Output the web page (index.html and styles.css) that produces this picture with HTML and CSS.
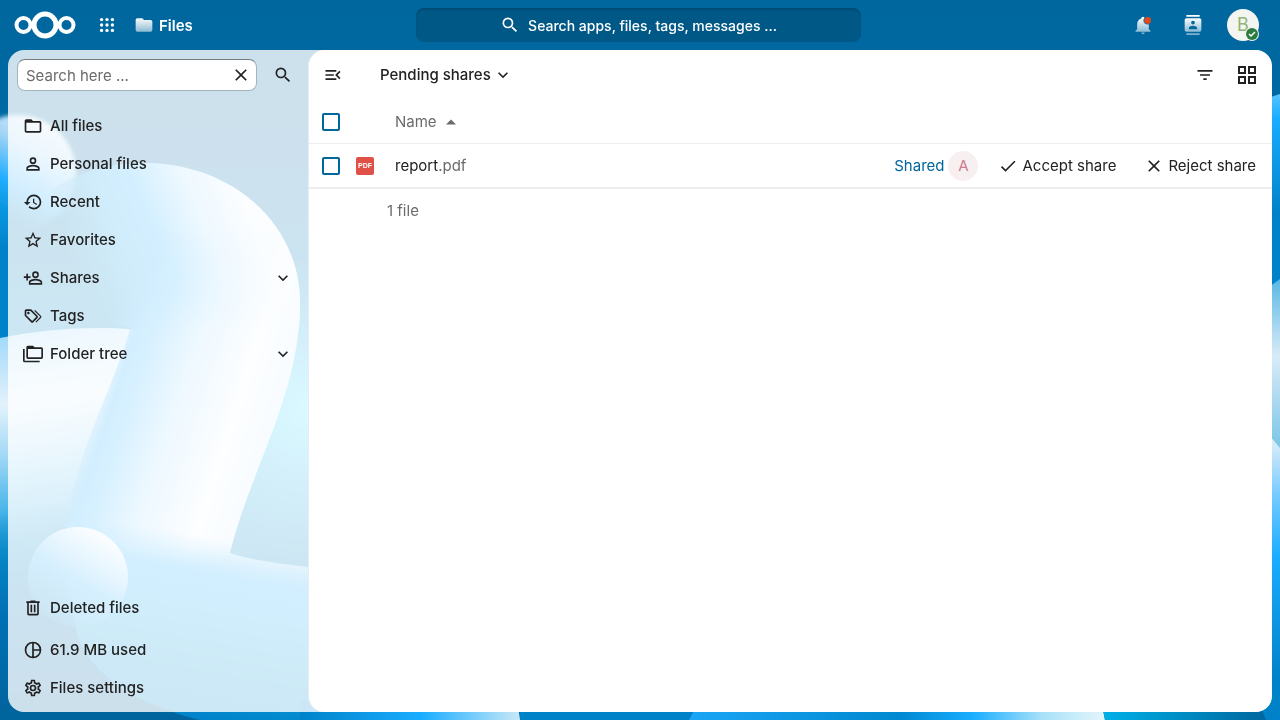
FILE: index.html
```
<!DOCTYPE html>
<html lang="en">
<head>
    <meta charset="UTF-8">
    <meta name="viewport" content="width=device-width, initial-scale=1.0">
    <title>Pending shares - Files</title>
    <link rel="stylesheet" href="styles.css">
</head>
<body>
    <svg class="wallpaper" viewBox="0 0 1280 720" preserveAspectRatio="none" aria-hidden="true">
        <defs>
            <linearGradient id="base" x1="0" y1="0" x2="0" y2="1">
                <stop offset="0" stop-color="#00679e"/>
                <stop offset=".2" stop-color="#0069a3"/>
                <stop offset=".45" stop-color="#0085c4"/>
                <stop offset=".72" stop-color="#0a90cc"/>
                <stop offset=".86" stop-color="#0070b4"/>
                <stop offset="1" stop-color="#00639c"/>
            </linearGradient>
            <radialGradient id="cyan" gradientUnits="userSpaceOnUse" cx="308" cy="410" r="150">
                <stop offset="0" stop-color="#45dfff"/>
                <stop offset=".35" stop-color="#3dd0fb" stop-opacity=".8"/>
                <stop offset="1" stop-color="#2bb5e8" stop-opacity="0"/>
            </radialGradient>
            <linearGradient id="ball" gradientUnits="userSpaceOnUse" x1="75" y1="130" x2="20" y2="235">
                <stop offset="0" stop-color="#dceefa"/>
                <stop offset=".3" stop-color="#a5d5f5"/>
                <stop offset=".65" stop-color="#1fadff"/>
                <stop offset="1" stop-color="#0087cc" stop-opacity="0"/>
            </linearGradient>
            <linearGradient id="leftEdge" x1="0" y1="0" x2="0" y2="1">
                <stop offset="0" stop-color="#1aadff"/>
                <stop offset=".45" stop-color="#0082c9"/>
                <stop offset="1" stop-color="#0082c9"/>
            </linearGradient>
            <linearGradient id="hill" gradientUnits="userSpaceOnUse" x1="40" y1="328" x2="75" y2="560">
                <stop offset="0" stop-color="#9fd8fa"/>
                <stop offset=".3" stop-color="#e3f2fb"/>
                <stop offset=".5" stop-color="#a6daf7"/>
                <stop offset=".75" stop-color="#48b5e8"/>
                <stop offset="1" stop-color="#0082c4" stop-opacity="0"/>
            </linearGradient>
            <linearGradient id="stem" gradientUnits="userSpaceOnUse" x1="100" y1="370" x2="272" y2="425">
                <stop offset="0" stop-color="#1aa5f5" stop-opacity="0"/>
                <stop offset=".12" stop-color="#20acff"/>
                <stop offset=".24" stop-color="#45baff"/>
                <stop offset=".45" stop-color="#a5dbff"/>
                <stop offset=".78" stop-color="#f2f8fd"/>
                <stop offset="1" stop-color="#d8effc"/>
            </linearGradient>
            <linearGradient id="stemTop" gradientUnits="userSpaceOnUse" x1="80" y1="290" x2="250" y2="220">
                <stop offset="0" stop-color="#0a90d0" stop-opacity="0"/>
                <stop offset=".3" stop-color="#18a0ea"/>
                <stop offset=".5" stop-color="#28b0ff"/>
                <stop offset=".75" stop-color="#a8dcff"/>
                <stop offset="1" stop-color="#e8f5fd"/>
            </linearGradient>
            <linearGradient id="stemRange" gradientUnits="userSpaceOnUse" x1="0" y1="230" x2="0" y2="630">
                <stop offset="0" stop-color="#fff" stop-opacity="0"/>
                <stop offset=".25" stop-color="#fff"/>
                <stop offset=".8" stop-color="#fff"/>
                <stop offset="1" stop-color="#fff" stop-opacity="0"/>
            </linearGradient>
            <mask id="stemMask"><rect width="400" height="720" fill="url(#stemRange)"/></mask>
            <linearGradient id="foot" gradientUnits="userSpaceOnUse" x1="225" y1="540" x2="192" y2="720">
                <stop offset="0" stop-color="#20aeff" stop-opacity="0"/>
                <stop offset=".2" stop-color="#20aeff"/>
                <stop offset=".35" stop-color="#1babf8"/>
                <stop offset=".6" stop-color="#0c9bdd"/>
                <stop offset="1" stop-color="#0082c9"/>
            </linearGradient>
            <linearGradient id="footStrip" gradientUnits="userSpaceOnUse" x1="300" y1="0" x2="520" y2="0">
                <stop offset="0" stop-color="#0082c9"/>
                <stop offset=".55" stop-color="#1aadff"/>
                <stop offset="1" stop-color="#c8e8f7"/>
            </linearGradient>
            <linearGradient id="drop" gradientUnits="userSpaceOnUse" x1="115" y1="545" x2="62" y2="630">
                <stop offset="0" stop-color="#e5f4fd"/>
                <stop offset=".5" stop-color="#35b1fb"/>
                <stop offset="1" stop-color="#1095dc" stop-opacity=".4"/>
            </linearGradient>
            <linearGradient id="bottomStrip" gradientUnits="userSpaceOnUse" x1="690" y1="0" x2="1105" y2="0">
                <stop offset="0" stop-color="#1aa5f5"/>
                <stop offset=".5" stop-color="#0088d0"/>
                <stop offset=".68" stop-color="#1aadff"/>
                <stop offset=".85" stop-color="#a8e2f8"/>
                <stop offset="1" stop-color="#e3f5fb"/>
            </linearGradient>
            <linearGradient id="tealStrip" gradientUnits="userSpaceOnUse" x1="1103" y1="0" x2="1265" y2="0">
                <stop offset="0" stop-color="#00b0e8"/>
                <stop offset="1" stop-color="#00679e"/>
            </linearGradient>
            <linearGradient id="rightTop" gradientUnits="userSpaceOnUse" x1="0" y1="94" x2="0" y2="290">
                <stop offset="0" stop-color="#58c3ff"/>
                <stop offset=".12" stop-color="#1aadff"/>
                <stop offset=".6" stop-color="#0082c9"/>
                <stop offset="1" stop-color="#0082c9"/>
            </linearGradient>
            <linearGradient id="rightMid" gradientUnits="userSpaceOnUse" x1="0" y1="280" x2="0" y2="450">
                <stop offset="0" stop-color="#5cb8e4"/>
                <stop offset=".45" stop-color="#d8ebf8"/>
                <stop offset="1" stop-color="#78c4e6"/>
            </linearGradient>
            <linearGradient id="rightLow" gradientUnits="userSpaceOnUse" x1="0" y1="438" x2="0" y2="720">
                <stop offset="0" stop-color="#e0eff8"/>
                <stop offset=".2" stop-color="#78cbff"/>
                <stop offset=".42" stop-color="#1aadff"/>
                <stop offset=".85" stop-color="#0082c9"/>
                <stop offset="1" stop-color="#0082c9"/>
            </linearGradient>
            <filter id="soft"><feGaussianBlur stdDeviation="2"/></filter>
            <clipPath id="tube"><path d="M40 200C70 172 108 163 148 163C235 165 300 225 300 303C300 395 250 470 230 553C250 560 280 564 308 567L420 600Q515 650 520 720H200C140 705 85 675 75 626C64 575 64 530 72 495C85 435 120 370 130 328L50 310Z"/></clipPath>
        </defs>
        <rect width="1280" height="720" fill="url(#base)"/>
        <rect x="150" y="240" width="200" height="330" fill="url(#cyan)"/>
        <rect y="170" width="8" height="170" fill="url(#leftEdge)"/>
        <circle cx="18" cy="173" r="58" fill="url(#ball)" filter="url(#soft)"/>
        <path d="M0 338Q65 325 130 329L160 340L110 600H0Z" fill="url(#hill)"/>
        <g clip-path="url(#tube)">
            <rect x="30" y="150" width="300" height="180" fill="url(#stemTop)"/>
            <rect x="30" y="230" width="350" height="400" fill="url(#stem)" mask="url(#stemMask)"/>
            <rect x="30" y="480" width="500" height="240" fill="url(#foot)"/>
        </g>
        <circle cx="78" cy="577" r="50" fill="url(#drop)"/>
        <rect x="520" y="700" width="180" height="20" fill="#0082c9"/>
        <path d="M300 700H517L520 720H300Z" fill="url(#footStrip)"/>
        <path d="M700 700H1101L1105 720H689Z" fill="url(#bottomStrip)"/>
        <path d="M1101 700H1260L1266 720H1105Z" fill="url(#tealStrip)"/>
        <path d="M1262 100L1280 94V290H1262Z" fill="url(#rightTop)"/>
        <path d="M1262 292L1280 279V460H1262Z" fill="url(#rightMid)"/>
        <path d="M1262 427L1280 448V720H1266L1258 700Z" fill="url(#rightLow)"/>
    </svg>

    <header class="header">
        <a class="logo" href="#" aria-label="Nextcloud">
            <svg width="62" height="30" viewBox="0 0 62 30" stroke="#fff">
                <circle cx="31" cy="15" r="11" stroke-width="5"/>
                <circle cx="9.500" cy="15" r="7" stroke-width="4"/>
                <circle cx="52.500" cy="15" r="7" stroke-width="4"/>
            </svg>
        </a>
        <button class="apps-button" aria-label="Apps">
            <svg width="20" height="20" viewBox="0 0 24 24"><circle cx="5.500" cy="5.500" r="2"/><circle cx="12" cy="5.500" r="2"/><circle cx="18.500" cy="5.500" r="2"/><circle cx="5.500" cy="12" r="2"/><circle cx="12" cy="12" r="2"/><circle cx="18.500" cy="12" r="2"/><circle cx="5.500" cy="18.500" r="2"/><circle cx="12" cy="18.500" r="2"/><circle cx="18.500" cy="18.500" r="2"/></svg>
        </button>
        <a class="current-app" href="#">
            <svg width="20" height="20" viewBox="0 0 24 24">
                <defs>
                    <linearGradient id="fade" gradientUnits="userSpaceOnUse" x1="0" y1="3" x2="0" y2="22">
                        <stop offset="0" stop-color="#fff"/>
                        <stop offset="1" stop-color="#7fb3cf"/>
                    </linearGradient>
                </defs>
                <path fill="url(#fade)" d="M10,4H4C2.89,4 2,4.89 2,6V18A2,2 0 0,0 4,20H20A2,2 0 0,0 22,18V8C22,6.89 21.1,6 20,6H12L10,4Z"/>
            </svg>
            <span class="header-label">Files</span>
        </a>
        <button class="unified-search">
            <svg width="20" height="20" viewBox="0 0 24 24"><path d="M9.5,3A6.5,6.5 0 0,1 16,9.5C16,11.11 15.41,12.59 14.44,13.73L14.71,14H15.5L20.5,19L19,20.5L14,15.5V14.71L13.73,14.44C12.59,15.41 11.11,16 9.5,16A6.5,6.5 0 0,1 3,9.5A6.5,6.5 0 0,1 9.5,3M9.5,5C7,5 5,7 5,9.5C5,12 7,14 9.5,14C12,14 14,12 14,9.5C14,7 12,5 9.5,5Z"/></svg>
            <span class="header-label">Search apps, files, tags, messages ...</span>
        </button>
        <div class="header-end">
            <button class="header-button" aria-label="Notifications">
                <svg width="20" height="20" viewBox="0 0 24 24"><path fill="url(#fade)" d="M21,19V20H3V19L5,17V11C5,7.9 7.03,5.17 10,4.29C10,4.19 10,4.1 10,4A2,2 0 0,1 12,2A2,2 0 0,1 14,4C14,4.1 14,4.19 14,4.29C16.97,5.17 19,7.9 19,11V17L21,19M14,21A2,2 0 0,1 12,23A2,2 0 0,1 10,21"/><circle cx="17.500" cy="6.500" r="5" fill="#0069a8"/><circle cx="17.500" cy="6.500" r="4" fill="#e0491b"/></svg>
            </button>
            <button class="header-button" aria-label="Contacts">
                <svg width="20" height="20" viewBox="0 0 24 24"><path fill="url(#fade)" d="M20,0H4V2H20V0M4,24H20V22H4V24M20,4H4A2,2 0 0,0 2,6V18A2,2 0 0,0 4,20H20A2,2 0 0,0 22,18V6A2,2 0 0,0 20,4M12,6.75A2.25,2.25 0 0,1 14.25,9A2.25,2.25 0 0,1 12,11.25A2.25,2.25 0 0,1 9.75,9A2.25,2.25 0 0,1 12,6.75M17,17H7V15.5C7,13.83 10.33,13 12,13C13.67,13 17,13.83 17,15.5V17Z"/></svg>
            </button>
            <button class="header-button" aria-label="Settings menu">
                <span class="avatar avatar-user">B
                    <svg class="status" width="14" height="14" viewBox="0 0 14 14"><circle cx="7" cy="7" r="7" fill="#f3f6f0"/><circle cx="7" cy="7" r="6" fill="#2d7b41"/><path d="M4 7l2 2 4-4" fill="none" stroke="#fff" stroke-width="1.500"/></svg>
                </span>
            </button>
        </div>
    </header>

    <div class="content">
        <nav class="navigation">
            <form class="nav-search">
                <div class="search-box">
                    <input type="text" placeholder="Search here ..." aria-label="Search here">
                    <button type="button" class="icon-button clear" aria-label="Clear search">
                        <svg width="20" height="20" viewBox="0 0 24 24"><path d="M19,6.41L17.59,5L12,10.59L6.41,5L5,6.41L10.59,12L5,17.59L6.41,19L12,13.41L17.59,19L19,17.59L13.41,12L19,6.41Z"/></svg>
                    </button>
                </div>
                <button type="button" class="icon-button" aria-label="Search">
                    <svg width="20" height="20" viewBox="0 0 24 24"><path d="M9.5,3A6.5,6.5 0 0,1 16,9.5C16,11.11 15.41,12.59 14.44,13.73L14.71,14H15.5L20.5,19L19,20.5L14,15.5V14.71L13.73,14.44C12.59,15.41 11.11,16 9.5,16A6.5,6.5 0 0,1 3,9.5A6.5,6.5 0 0,1 9.5,3M9.5,5C7,5 5,7 5,9.5C5,12 7,14 9.5,14C12,14 14,12 14,9.5C14,7 12,5 9.5,5Z"/></svg>
                </button>
            </form>
            <ul class="nav-list">
                <li>
                    <a href="#"><svg width="20" height="20" viewBox="0 0 24 24"><path d="M20,18H4V8H20M20,6H12L10,4H4C2.89,4 2,4.89 2,6V18A2,2 0 0,0 4,20H20A2,2 0 0,0 22,18V8C22,6.89 21.1,6 20,6Z"/></svg>All files</a>
                </li>
                <li>
                    <a href="#"><svg width="20" height="20" viewBox="0 0 24 24"><path d="M12,4A4,4 0 0,1 16,8A4,4 0 0,1 12,12A4,4 0 0,1 8,8A4,4 0 0,1 12,4M12,6A2,2 0 0,0 10,8A2,2 0 0,0 12,10A2,2 0 0,0 14,8A2,2 0 0,0 12,6M12,13C14.67,13 20,14.33 20,17V20H4V17C4,14.33 9.33,13 12,13M12,14.9C9.03,14.9 5.9,16.36 5.9,17V18.1H18.1V17C18.1,16.36 14.97,14.9 12,14.9Z"/></svg>Personal files</a>
                </li>
                <li>
                    <a href="#"><svg width="20" height="20" viewBox="0 0 24 24"><path d="M13.5,8H12V13L16.28,15.54L17,14.33L13.5,12.25V8M13,3A9,9 0 0,0 4,12H1L4.96,16.03L9,12H6A7,7 0 0,1 13,5A7,7 0 0,1 20,12A7,7 0 0,1 13,19C11.07,19 9.32,18.21 8.06,16.94L6.64,18.36C8.27,20 10.5,21 13,21A9,9 0 0,0 22,12A9,9 0 0,0 13,3"/></svg>Recent</a>
                </li>
                <li>
                    <a href="#"><svg width="20" height="20" viewBox="0 0 24 24"><path d="M12,15.39L8.24,17.66L9.23,13.38L5.91,10.5L10.29,10.13L12,6.09L13.71,10.13L18.09,10.5L14.77,13.38L15.76,17.66M22,9.24L14.81,8.63L12,2L9.19,8.63L2,9.24L7.45,13.97L5.82,21L12,17.27L18.18,21L16.54,13.97L22,9.24Z"/></svg>Favorites</a>
                </li>
                <li>
                    <a href="#"><svg width="20" height="20" viewBox="0 0 24 24"><path d="M15,4A4,4 0 0,0 11,8A4,4 0 0,0 15,12A4,4 0 0,0 19,8A4,4 0 0,0 15,4M15,5.9C16.16,5.9 17.1,6.84 17.1,8C17.1,9.16 16.16,10.1 15,10.1A2.1,2.1 0 0,1 12.9,8A2.1,2.1 0 0,1 15,5.9M4,7V10H1V12H4V15H6V12H9V10H6V7H4M15,13C12.33,13 7,14.33 7,17V20H23V17C23,14.33 17.67,13 15,13M15,14.9C17.97,14.9 21.1,16.36 21.1,17V18.1H8.9V17C8.9,16.36 12,14.9 15,14.9Z"/></svg>Shares</a>
                    <button class="icon-button" aria-label="Open Shares"><svg width="20" height="20" viewBox="0 0 24 24"><path d="M7.41,8.58L12,13.17L16.59,8.58L18,10L12,16L6,10L7.41,8.58Z"/></svg></button>
                </li>
                <li>
                    <a href="#"><svg width="20" height="20" viewBox="0 0 24 24"><path d="M6.5 10C7.3 10 8 9.3 8 8.5S7.3 7 6.5 7 5 7.7 5 8.5 5.7 10 6.5 10M9 6L16 13L11 18L4 11V6H9M9 4H4C2.9 4 2 4.9 2 6V11C2 11.6 2.2 12.1 2.6 12.4L9.6 19.4C9.9 19.8 10.4 20 11 20S12.1 19.8 12.4 19.4L17.4 14.4C17.8 14 18 13.5 18 13C18 12.4 17.8 11.9 17.4 11.6L10.4 4.6C10.1 4.2 9.6 4 9 4M13.5 5.7L14.5 4.7L21.4 11.6C21.8 12 22 12.5 22 13S21.8 14.1 21.4 14.4L16 19.8L15 18.8L20.7 13L13.5 5.7Z"/></svg>Tags</a>
                </li>
                <li>
                    <a href="#"><svg width="20" height="20" viewBox="0 0 24 24"><path d="M22,4A2,2 0 0,1 24,6V16A2,2 0 0,1 22,18H6A2,2 0 0,1 4,16V4A2,2 0 0,1 6,2H12L14,4H22M2,6V20H20V22H2A2,2 0 0,1 0,20V11H0V6H2M6,6V16H22V6H6Z"/></svg>Folder tree</a>
                    <button class="icon-button" aria-label="Open Folder tree"><svg width="20" height="20" viewBox="0 0 24 24"><path d="M7.41,8.58L12,13.17L16.59,8.58L18,10L12,16L6,10L7.41,8.58Z"/></svg></button>
                </li>
            </ul>
            <ul class="nav-list nav-footer">
                <li class="trash">
                    <a href="#"><svg width="20" height="20" viewBox="0 0 24 24"><path d="M9,3V4H4V6H5V19A2,2 0 0,0 7,21H17A2,2 0 0,0 19,19V6H20V4H15V3H9M7,6H17V19H7V6M9,8V17H11V8H9M13,8V17H15V8H13Z"/></svg>Deleted files</a>
                </li>
                <li>
                    <a href="#"><svg width="20" height="20" viewBox="0 0 24 24"><path d="M12 3a9 9 0 1 0 0 18a9 9 0 1 0 0-18M12 3V21M12 12H21" fill="none" stroke="currentColor" stroke-width="2"/></svg>61.9 MB used</a>
                </li>
                <li>
                    <a href="#"><svg width="20" height="20" viewBox="0 0 24 24"><path d="M12,8A4,4 0 0,1 16,12A4,4 0 0,1 12,16A4,4 0 0,1 8,12A4,4 0 0,1 12,8M12,10A2,2 0 0,0 10,12A2,2 0 0,0 12,14A2,2 0 0,0 14,12A2,2 0 0,0 12,10M10,22C9.75,22 9.54,21.82 9.5,21.58L9.13,18.93C8.5,18.68 7.96,18.34 7.44,17.94L4.95,18.95C4.73,19.03 4.46,18.95 4.34,18.73L2.34,15.27C2.21,15.05 2.27,14.78 2.46,14.63L4.57,12.97L4.5,12L4.57,11L2.46,9.37C2.27,9.22 2.21,8.95 2.34,8.73L4.34,5.27C4.46,5.05 4.73,4.96 4.95,5.05L7.44,6.05C7.96,5.66 8.5,5.32 9.13,5.07L9.5,2.42C9.54,2.18 9.75,2 10,2H14C14.25,2 14.46,2.18 14.5,2.42L14.87,5.07C15.5,5.32 16.04,5.66 16.56,6.05L19.05,5.05C19.27,4.96 19.54,5.05 19.66,5.27L21.66,8.73C21.79,8.95 21.73,9.22 21.54,9.37L19.43,11L19.5,12L19.43,13L21.54,14.63C21.73,14.78 21.79,15.05 21.66,15.27L19.66,18.73C19.54,18.95 19.27,19.04 19.05,18.95L16.56,17.95C16.04,18.34 15.5,18.68 14.87,18.93L14.5,21.58C14.46,21.82 14.25,22 14,22H10M11.25,4L10.88,6.61C9.68,6.86 8.62,7.5 7.85,8.39L5.44,7.35L4.69,8.65L6.8,10.2C6.4,11.37 6.4,12.64 6.8,13.8L4.68,15.36L5.43,16.66L7.86,15.62C8.63,16.5 9.68,17.14 10.87,17.38L11.24,20H12.76L13.13,17.39C14.32,17.14 15.37,16.5 16.14,15.62L18.57,16.66L19.32,15.36L17.2,13.81C17.6,12.64 17.6,11.37 17.2,10.2L19.31,8.65L18.56,7.35L16.15,8.39C15.38,7.5 14.32,6.86 13.12,6.62L12.75,4H11.25Z"/></svg>Files settings</a>
                </li>
            </ul>
        </nav>

        <main class="files">
            <div class="toolbar">
                <button class="icon-button" aria-label="Close navigation">
                    <svg width="20" height="20" viewBox="0 0 24 24"><path d="M21,15.61L19.59,17L14.58,12L19.59,7L21,8.39L17.44,12L21,15.61M3,6H16V8H3V6M3,13V11H13V13H3M3,18V16H16V18H3Z"/></svg>
                </button>
                <button class="breadcrumb">
                    Pending shares
                    <svg width="20" height="20" viewBox="0 0 24 24"><path d="M7.41,8.58L12,13.17L16.59,8.58L18,10L12,16L6,10L7.41,8.58Z"/></svg>
                </button>
                <div class="toolbar-end">
                    <button class="icon-button" aria-label="Filters">
                        <svg width="20" height="20" viewBox="0 0 24 24"><path d="M6,13H18V11H6M3,6V8H21V6M10,18H14V16H10V18Z"/></svg>
                    </button>
                    <button class="icon-button" aria-label="Switch to grid view">
                        <svg width="24" height="24" viewBox="0 0 24 24"><path fill-rule="evenodd" d="M3 3H11V11H3ZM5 5V9H9V5ZM13 3H21V11H13ZM15 5V9H19V5ZM3 13H11V21H3ZM5 15V19H9V15ZM13 13H21V21H13ZM15 15V19H19V15Z"/></svg>
                    </button>
                </div>
            </div>
            <table class="files-list">
                <thead>
                    <tr>
                        <th class="col-check"><input type="checkbox" aria-label="Toggle selection for all files"></th>
                        <th class="col-icon"></th>
                        <th class="col-name">
                            <button class="sort-button">Name
                                <svg width="20" height="20" viewBox="0 0 24 24"><path d="M6,15L12,9L18,15H6Z"/></svg>
                            </button>
                        </th>
                        <th class="col-actions"></th>
                    </tr>
                </thead>
                <tbody>
                    <tr>
                        <td class="col-check"><input type="checkbox" aria-label="Toggle selection for file report.pdf"></td>
                        <td class="col-icon"><span class="pdf-icon">PDF</span></td>
                        <td class="col-name"><a href="#">report<span class="ext">.pdf</span></a></td>
                        <td class="col-actions">
                            <div class="actions">
                                <button class="shared">Shared <span class="avatar avatar-owner">A</span></button>
                                <button class="action"><svg width="20" height="20" viewBox="0 0 24 24"><path d="M21,7L9,19L3.5,13.5L4.91,12.09L9,16.17L19.59,5.59L21,7Z"/></svg>Accept share</button>
                                <button class="action"><svg width="20" height="20" viewBox="0 0 24 24"><path d="M19,6.41L17.59,5L12,10.59L6.41,5L5,6.41L10.59,12L5,17.59L6.41,19L12,13.41L17.59,19L19,17.59L13.41,12L19,6.41Z"/></svg>Reject share</button>
                            </div>
                        </td>
                    </tr>
                </tbody>
            </table>
            <p class="summary">1 file</p>
        </main>
    </div>
</body>
</html>
```
FILE: styles.css
```
* {
    box-sizing: border-box;
}

body {
    display: flex;
    flex-direction: column;
    min-height: 100vh;
    margin: 0;
    font-family: Inter, "Liberation Sans", sans-serif;
    font-size: 15px;
    line-height: 24px;
    color: #222;
    background-color: #00679e;
}

button,
input {
    font: inherit;
    color: inherit;
}

button {
    display: flex;
    align-items: center;
    padding: 0;
    border: none;
    background: none;
    cursor: pointer;
}

a {
    color: inherit;
    text-decoration: none;
}

svg {
    display: block;
    flex-shrink: 0;
    fill: currentColor;
}

.wallpaper {
    position: fixed;
    top: 0;
    left: 0;
    z-index: -1;
    width: 100%;
    height: 100%;
}

.header {
    display: flex;
    align-items: center;
    height: 50px;
    padding: 0 12px 0 14px;
    color: #fff;
}

.logo svg {
    fill: none;
}

.apps-button {
    justify-content: center;
    width: 62px;
    height: 50px;
}

.current-app {
    display: flex;
    align-items: center;
    flex: 1;
    gap: 5px;
    margin-left: -4px;
    font-weight: 600;
}

.header-label {
    padding-top: 2px;
}

.unified-search {
    flex: 0 1 445px;
    justify-content: center;
    gap: 8px;
    height: 34px;
    border-radius: 8px;
    background-color: #005887;
    box-shadow: inset 0 2px 2px rgba(0, 0, 0, 0.15);
    font-size: 14px;
    font-weight: 500;
}

.header-end {
    display: flex;
    flex: 1;
    justify-content: flex-end;
    margin-left: 125px;
}

.header-button {
    justify-content: center;
    width: 50px;
    height: 50px;
}

.avatar {
    display: flex;
    align-items: center;
    justify-content: center;
    position: relative;
    border-radius: 50%;
}

.avatar-user {
    width: 32px;
    height: 32px;
    background-color: #f3f6f0;
    color: #92b478;
    font-size: 18px;
}

.status {
    position: absolute;
    right: 0;
    bottom: 0;
}

.avatar-owner {
    width: 30px;
    height: 30px;
    background-color: #f8eff1;
    color: #cb7c93;
}

.content {
    display: flex;
    flex: 1;
    margin: 0 8px 8px;
    border-radius: 16px;
    overflow: hidden;
    background-color: rgba(255, 255, 255, 0.8);
}

.navigation {
    display: flex;
    flex-direction: column;
    width: 300px;
    padding: 8px 8px 7px;
}

.nav-search {
    display: flex;
    align-items: center;
    gap: 9px;
    margin: 0 0 17px 1px;
}

.search-box {
    display: flex;
    align-items: center;
    flex: 1;
    min-width: 0;
    height: 32px;
    border: 1px solid #a4b5c0;
    border-top-color: #747c81;
    border-radius: 8px;
    background-color: #fff;
}

.search-box input {
    flex: 1;
    min-width: 0;
    padding: 2px 0 0 8px;
    border: none;
    outline: none;
    background: none;
}

.search-box input::placeholder {
    color: #6b6b6b;
    opacity: 1;
}

.icon-button {
    justify-content: center;
    width: 34px;
    height: 34px;
}

.clear {
    width: 30px;
}

.nav-list {
    display: flex;
    flex-direction: column;
    gap: 4px;
    margin: 0;
    padding: 0;
    list-style: none;
    font-weight: 500;
}

.nav-list li {
    display: flex;
}

.nav-list a {
    display: flex;
    align-items: center;
    flex: 1;
    gap: 7px;
    height: 34px;
    padding-left: 7px;
}

.nav-footer {
    margin-top: auto;
}

.trash {
    margin-bottom: 4px;
}

.files {
    flex: 1;
    border-left: 1px solid #e6edf1;
    border-radius: 16px;
    background-color: #fff;
}

.toolbar {
    display: flex;
    align-items: center;
    height: 50px;
    padding: 0 8px 0 7px;
}

.breadcrumb {
    gap: 2px;
    margin-left: 30px;
    font-weight: 500;
}

.toolbar-end {
    display: flex;
    gap: 8px;
    margin-left: auto;
}

.files-list {
    width: 100%;
    border-collapse: collapse;
}

.files-list tr {
    height: 45px;
    border-bottom: 2px solid #ededed;
}

.files-list thead tr {
    height: 43px;
    border-bottom-width: 1px;
}

.files-list th,
.files-list td {
    padding: 2px 0 0;
    font-weight: 400;
    text-align: left;
}

.files-list .col-check {
    width: 44px;
    padding-left: 13px;
}

.files-list .col-icon {
    width: 42px;
    padding-left: 3px;
}

.col-check input {
    display: block;
    appearance: none;
    width: 18px;
    height: 18px;
    margin: 0;
    border: 2px solid #00679e;
    border-radius: 2px;
    background-color: #fff;
}

.sort-button {
    gap: 4px;
    color: #6b6b6b;
}

.pdf-icon {
    display: flex;
    align-items: center;
    justify-content: center;
    width: 18px;
    height: 18px;
    border-radius: 2px;
    background-color: #df5047;
    color: #fff;
    font-family: "Liberation Sans", sans-serif;
    font-size: 7px;
    font-weight: 700;
}

.ext {
    color: #6b6b6b;
}

.actions {
    display: flex;
    justify-content: flex-end;
    padding-right: 16px;
}

.shared {
    gap: 4px;
    margin-right: 20px;
    color: #00679e;
}

.action {
    gap: 4px;
}

.action + .action {
    margin-left: 28px;
}

.summary {
    margin: 10px 0 0 78px;
    color: #6b6b6b;
}
```
